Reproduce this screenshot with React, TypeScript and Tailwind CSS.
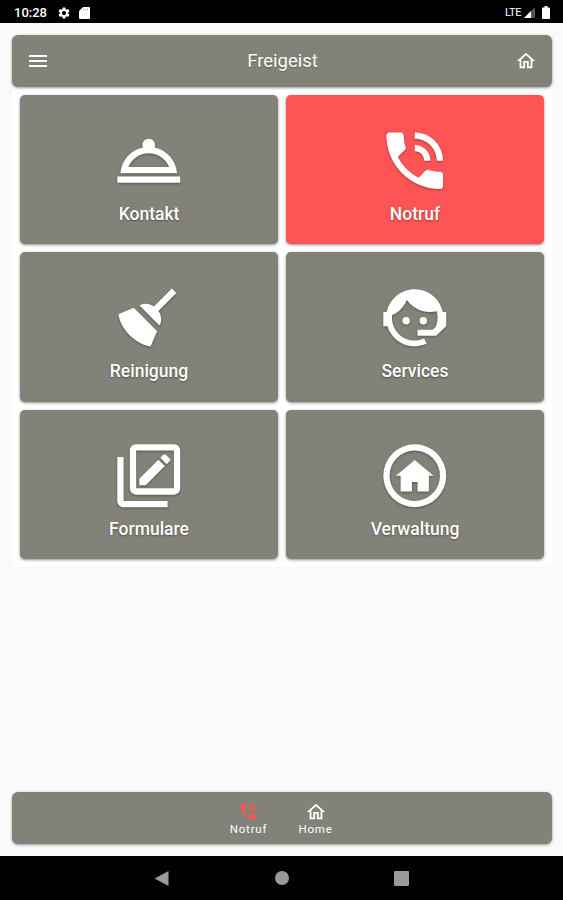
import type { ReactNode } from "react";
import { MdMenu, MdOutlineHome, MdPhoneInTalk, MdSettings } from "react-icons/md";

type Tile = {
    label: string;
    icon: ReactNode;
    alert?: boolean;
};

const tiles: Tile[] = [
    {
        label: "Kontakt",
        icon: (
            <path d="M13.84 7.79c.1-.24.16-.51.16-.79 0-1.1-.9-2-2-2s-2 .9-2 2c0 .28.06.55.16.79C6.25 8.6 3.27 11.93 3 16h18c-.27-4.07-3.25-7.4-7.16-8.21M12 9.58c2.95 0 5.47 1.83 6.5 4.41h-13c1.03-2.58 3.55-4.41 6.5-4.41M2 17h20v2H2z" />
        ),
    },
    {
        label: "Notruf",
        icon: (
            <path d="M20 15.5c-1.25 0-2.45-.2-3.57-.57a1.02 1.02 0 0 0-1.02.24l-2.2 2.2a15.05 15.05 0 0 1-6.59-6.58l2.2-2.21c.28-.27.36-.66.25-1.01A11.36 11.36 0 0 1 8.5 4c0-.55-.45-1-1-1H4c-.55 0-1 .45-1 1 0 9.39 7.61 17 17 17 .55 0 1-.45 1-1v-3.5c0-.55-.45-1-1-1M19 12h2a9 9 0 0 0-9-9v2c3.87 0 7 3.13 7 7m-4 0h2c0-2.76-2.24-5-5-5v2c1.66 0 3 1.34 3 3" />
        ),
        alert: true,
    },
    {
        label: "Reinigung",
        icon: (
            <path d="M19.36 2.72l1.42 1.42-5.72 5.71c1.07 1.54 1.22 3.39.32 4.59L9.06 8.12c1.2-.9 3.05-.75 4.59.32l5.71-5.72M5.93 17.57c-2.01-2.01-3.24-4.41-3.58-6.65l4.88-2.09 7.44 7.44-2.09 4.88c-2.24-.34-4.64-1.57-6.65-3.58" />
        ),
    },
    {
        label: "Services",
        icon: (
            <>
                <path d="M18.72 14.76C19.07 13.91 19.26 13 19.26 12c0-.72-.11-1.41-.3-2.05-.65.15-1.33.23-2.04.23-3.06 0-5.77-1.51-7.42-3.84-.89 2.16-2.59 3.92-4.73 4.88C4.73 11.47 4.73 11.74 4.73 12A7.27 7.27 0 0 0 12 19.27c1.05 0 2.06-.23 2.97-.64.57 1.09.83 1.63.81 1.63-1.64.55-2.91.82-3.78.82-2.42 0-4.73-.95-6.43-2.66-1.04-1.04-1.81-2.31-2.24-3.69H2v-4.55h1.09C3.93 6.04 7.6 2.92 12 2.92c2.4 0 4.71.95 6.42 2.66 1.27 1.26 2.12 2.87 2.47 4.6H22v4.55h-.06l-3.12 3h-5.94v-1.92h4.82z" />
                <circle cx="9.27" cy="12.95" r="1.18" />
                <circle cx="14.72" cy="12.95" r="1.18" />
            </>
        ),
    },
    {
        label: "Formulare",
        icon: (
            <>
                <path d="M20 2H8c-1.1 0-2 .9-2 2v12c0 1.1.9 2 2 2h12c1.1 0 2-.9 2-2V4c0-1.1-.9-2-2-2m0 14H8V4h12zM4 6v14h14v2H4c-1.1 0-2-.9-2-2V6z" />
                <path d="M18.7 7.35l-1 1-2.05-2.05 1-1c.21-.22.56-.22.77 0l1.28 1.28c.22.21.22.56 0 .77M9 12.94V15h2.06l6.06-6.06-2.06-2.06z" />
            </>
        ),
    },
    {
        label: "Verwaltung",
        icon: (
            <>
                <path d="M12 20a8 8 0 1 1 0-16 8 8 0 0 1 0 16m0-18a10 10 0 1 0 0 20 10 10 0 0 0 0-20" />
                <path d="M11.100 17v-3h1.800v3h3.600v-5H18l-6-5-6 5h1.500v5z" />
            </>
        ),
    },
];

const StatusBar = () => (
    <div className="flex h-[23px] items-center justify-between bg-black pl-[14px] pr-[13px] text-white">
        <div className="flex items-center pt-0.5">
            <span className="w-[43px] text-[13px] font-medium leading-none">10:28</span>
            <MdSettings className="size-[14px]" />
            <svg className="ml-[8px] h-[12px] w-[11px]" viewBox="0 0 11 12" fill="currentColor">
                <path d="M4 0h6q1 0 1 1v10q0 1-1 1H1q-1 0-1-1V4z" />
                <path d="M4.3 1.500v2M6.4 1.500v2M8.5 1.500v2" stroke="#aaa" strokeWidth="0.8" />
            </svg>
        </div>
        <div className="flex items-center pt-0.5">
            <span className="w-[19px] text-[11px] leading-none tracking-[-0.4px]">LTE</span>
            <svg className="h-[11px] w-[11px]" viewBox="0 0 11 11">
                <path d="M11 0v11H0z" fill="#555" />
                <path d="M7 4v7H0z" fill="#fff" />
            </svg>
            <svg className="ml-[7px] h-[13px] w-[8px]" viewBox="0 0 8 13" fill="currentColor">
                <path d="M2.5 0h3v1.5H7q1 0 1 1V12q0 1-1 1H1q-1 0-1-1V2.5q0-1 1-1h1.5z" />
            </svg>
        </div>
    </div>
);

const TileButton = ({ label, icon, alert }: Tile) => (
    <button
        className={`flex h-[149.5px] flex-col items-center rounded-[5px] pt-[28px] text-white shadow-[0_1px_3px_rgba(0,0,0,0.45)] ${
            alert ? "bg-[#ff5455]" : "bg-[#828278]"
        }`}
    >
        <svg
            className="size-[75.5px] shrink-0 drop-shadow-[0_1px_1px_rgba(0,0,0,0.35)]"
            viewBox="0 0 24 24"
            fill="currentColor"
        >
            {icon}
        </svg>
        <span className="mt-[4.5px] text-[17.5px] font-medium leading-[22px] [text-shadow:0_1px_2px_rgba(0,0,0,0.4)]">
            {label}
        </span>
    </button>
);

const App = () => {
    return (
        <div className="flex h-[900px] w-[563px] flex-col overflow-hidden bg-[#fafafa] font-[Roboto,sans-serif]">
            <StatusBar />

            <main className="flex flex-1 flex-col pl-[12px] pr-[11px] pt-[12px]">
                <header className="z-10 flex h-[51.5px] shrink-0 items-center justify-between rounded-[6px] bg-[#828278] px-[14px] text-white shadow-[0_1px_3px_rgba(0,0,0,0.4)]">
                    <MdMenu className="size-[24px]" />
                    <h1 className="text-[18.5px] leading-none [text-shadow:0_1px_1px_rgba(0,0,0,0.3)]">Freigeist</h1>
                    <MdOutlineHome className="mr-[1px] size-[22px]" />
                </header>

                <section className="grid grid-cols-2 gap-[8px] rounded-b-[6px] bg-white px-[8px] pb-[8px] pt-[8px] shadow-[0_0_3px_rgba(0,0,0,0.04)]">
                    {tiles.map((tile) => (
                        <TileButton key={tile.label} {...tile} />
                    ))}
                </section>

                <nav className="mb-[12px] mt-auto flex h-[52px] shrink-0 justify-center rounded-[6px] bg-[#828278] pt-[9px] text-white shadow-[0_1px_3px_rgba(0,0,0,0.4)]">
                    <div className="flex w-[67px] flex-col items-center text-[11.5px] leading-[15px] tracking-[0.8px]">
                        <MdPhoneInTalk className="size-[21px] text-[#ff5455]" />
                        <span>Notruf</span>
                    </div>
                    <div className="flex w-[67px] flex-col items-center text-[11.5px] leading-[15px] tracking-[0.8px]">
                        <MdOutlineHome className="size-[22px]" />
                        <span className="-mt-px">Home</span>
                    </div>
                </nav>
            </main>

            {/* Android navigation */}
            <footer className="flex h-[44px] items-center justify-center gap-[105.5px] bg-black text-[#999]">
                <svg className="size-[15px]" viewBox="0 0 15 15" fill="currentColor">
                    <path d="M14.5 0v15L.5 7.5z" />
                </svg>
                <span className="size-[14px] rounded-full bg-[#999]" />
                <span className="size-[15px] rounded-[1px] bg-[#999]" />
            </footer>
        </div>
    );
};

export default App;
